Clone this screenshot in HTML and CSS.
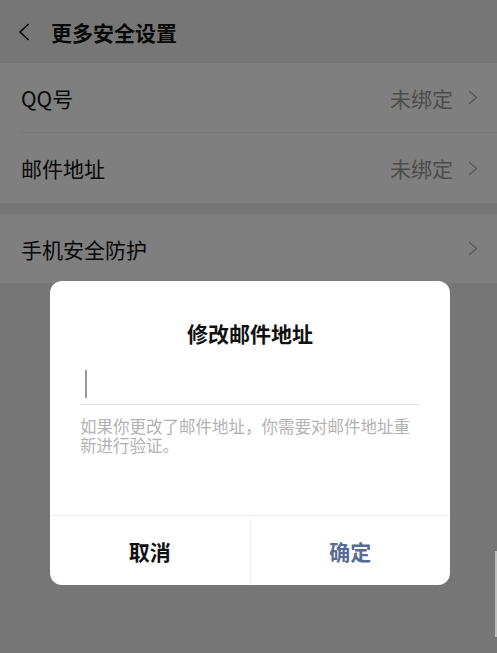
FILE: index.html
```html
<!DOCTYPE html>
<html lang="zh-CN">
<head>
<meta charset="utf-8">
<title>更多安全设置</title>
<link rel="stylesheet" href="styles.css">
</head>
<body>
<div class="page">
  <header class="nav">
    <svg class="back" width="12" height="18" viewBox="0 0 12 18"><path d="M10.5 1 L2 9 L10.5 17" fill="none" stroke="#111" stroke-width="1.6"/></svg>
    <h1 class="nav-title">更多安全设置</h1>
  </header>

  <section class="group">
    <div class="row">
      <span class="label">QQ号</span>
      <span class="value">未绑定<svg class="arrow" width="10" height="15" viewBox="0 0 10 15"><path d="M1 1 L8.5 7.5 L1 14" fill="none" stroke="#b2b2b2" stroke-width="1.5"/></svg></span>
    </div>
    <div class="divider"></div>
    <div class="row row-tall">
      <span class="label">邮件地址</span>
      <span class="value">未绑定<svg class="arrow" width="10" height="15" viewBox="0 0 10 15"><path d="M1 1 L8.5 7.5 L1 14" fill="none" stroke="#b2b2b2" stroke-width="1.5"/></svg></span>
    </div>
  </section>

  <section class="group group-gap">
    <div class="row">
      <span class="label">手机安全防护</span>
      <span class="value"><svg class="arrow" width="10" height="15" viewBox="0 0 10 15"><path d="M1 1 L8.5 7.5 L1 14" fill="none" stroke="#b2b2b2" stroke-width="1.5"/></svg></span>
    </div>
  </section>

  <div class="mask"></div>
  <div class="scrollbar"></div>

  <div class="dialog">
    <h2 class="dialog-title">修改邮件地址</h2>
    <div class="field"><span class="caret"></span></div>
    <p class="hint">如果你更改了邮件地址，你需要对邮件地址重新进行验证。</p>
    <div class="actions">
      <button class="btn btn-cancel">取消</button>
      <button class="btn btn-ok">确定</button>
    </div>
  </div>
</div>
</body>
</html>
```

FILE: styles.css
```css
* { box-sizing: border-box; }
html, body {
  margin: 0;
  padding: 0;
  width: 497px;
  height: 653px;
  overflow: hidden;
}
body {
  background: #ededed;
  font-family: "Noto Sans CJK SC", "Noto Sans", sans-serif;
  color: #111;
}
.page {
  position: relative;
  width: 497px;
  height: 653px;
}
.nav {
  height: 63px;
  display: flex;
  align-items: center;
  padding-left: 18px;
  background: #ededed;
}
.back { display: block; margin-top: 1px; }
.nav-title {
  margin: 0 0 0 21px;
  font-size: 21px;
  font-weight: 700;
  line-height: 30px;
  color: #111;
}
.group {
  background: #fff;
}
.group-gap { margin-top: 11px; }
.row {
  height: 69px;
  display: flex;
  align-items: center;
  justify-content: space-between;
  padding: 0 19px 0 21px;
}
.row-tall { height: 70px; }
.divider {
  height: 1px;
  margin-left: 21px;
  background: #ececec;
}
.label {
  font-size: 21px;
  line-height: 30px;
  color: #111;
}
.value {
  display: flex;
  align-items: center;
  font-size: 21px;
  line-height: 30px;
  color: #999;
}
.arrow {
  display: block;
  margin-left: 15px;
}
.mask {
  position: absolute;
  inset: 0;
  background: rgba(0, 0, 0, 0.5);
}
.scrollbar {
  position: absolute;
  right: 0;
  top: 551px;
  width: 2px;
  height: 86px;
  background: #bdbdbd;
}
.dialog {
  position: absolute;
  left: 50px;
  top: 281px;
  width: 400px;
  height: 304px;
  background: #fff;
  border-radius: 12px;
  display: flex;
  flex-direction: column;
  overflow: hidden;
}
.dialog-title {
  margin: 37px 0 0;
  font-size: 21px;
  font-weight: 700;
  line-height: 30px;
  text-align: center;
  color: #111;
}
.field {
  margin: 22px 30px 0;
  height: 35px;
  padding: 0 0 6px 5px;
  border-bottom: 1px solid #e5e5e5;
}
.caret {
  display: block;
  width: 1.5px;
  height: 28px;
  background: #999;
}
.hint {
  margin: 12px 30px 0;
  font-size: 16.5px;
  line-height: 18.5px;
  color: #b2b2b2;
}
.actions {
  margin-top: auto;
  height: 70px;
  display: flex;
  border-top: 1px solid #efefef;
}
.btn {
  flex: 1;
  border: 0;
  background: transparent;
  font-family: inherit;
  font-size: 21px;
  font-weight: 700;
  padding: 0;
  margin: 0;
}
.btn-cancel { color: #111; }
.btn-ok {
  color: #576b95;
  border-left: 1px solid #efefef;
}
```
